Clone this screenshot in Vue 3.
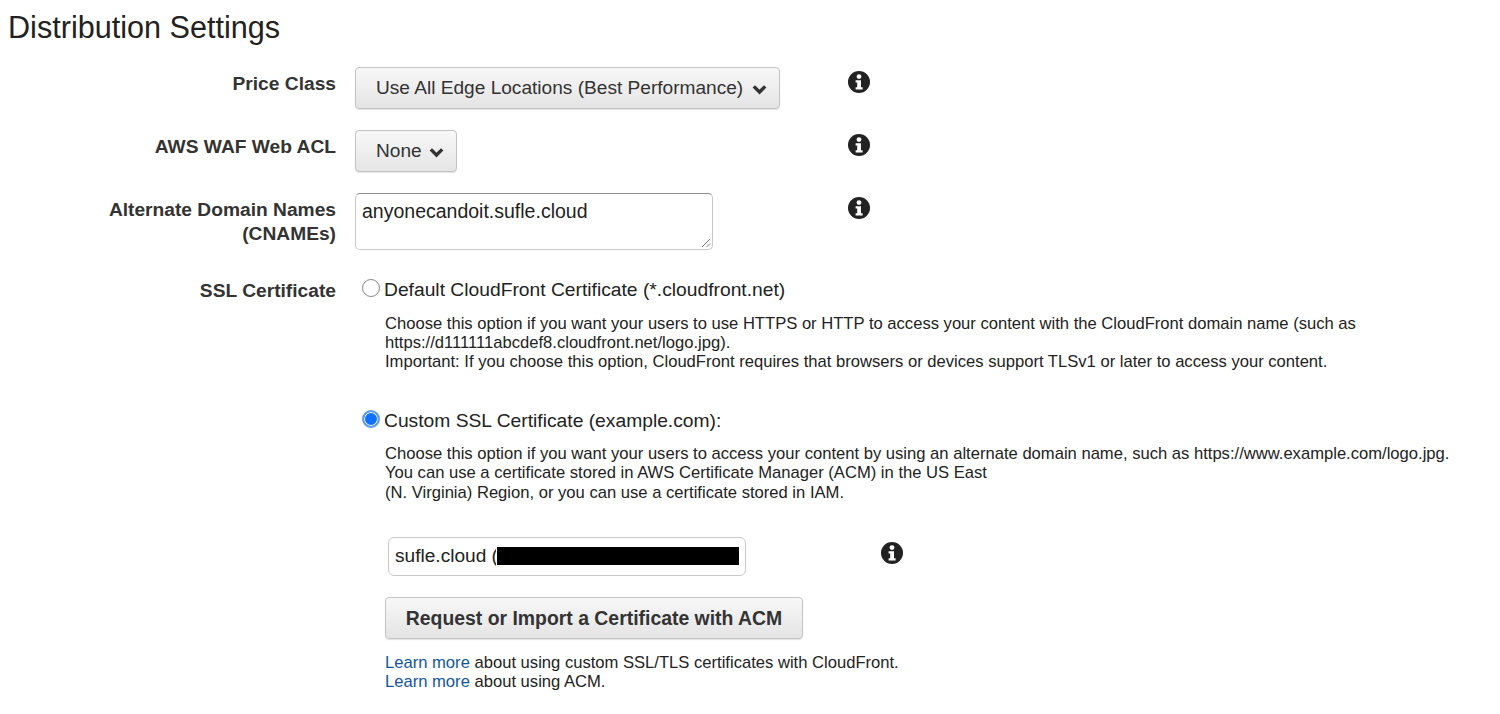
<script setup>
const rows = [
  { label: 'Price Class', kind: 'pick', value: 'Use All Edge Locations (Best Performance)' },
  { label: 'AWS WAF Web ACL', kind: 'pick', value: 'None', tight: true },
  { label: 'Alternate Domain Names (CNAMEs)', kind: 'text', value: 'anyonecandoit.sufle.cloud' },
];
</script>

<template>
  <div class="page">
    <h1>Distribution Settings</h1>

    <div v-for="row in rows" :key="row.label" class="row">
      <div class="label">{{ row.label }}</div>
      <div class="control">
        <div v-if="row.kind === 'pick'" class="btn select" :class="{ tight: row.tight }">
          <span>{{ row.value }}</span>
          <svg class="chev" viewBox="0 0 15 11" width="15" height="11">
            <path d="M1.8 2.4 7.5 8 13.2 2.4" fill="none" stroke="#333" stroke-width="3.4" />
          </svg>
        </div>
        <div v-else class="area">
          {{ row.value }}
          <svg class="grip" viewBox="0 0 10 10" width="10" height="10">
            <path d="M1 9 9 1M5.5 9 9 5.5" stroke="#777" stroke-width="1" fill="none" />
          </svg>
        </div>
      </div>
      <svg class="info" viewBox="0 0 22 22" width="22" height="22">
        <circle cx="11" cy="11" r="11" fill="#222" />
        <circle cx="11" cy="5.6" r="2.4" fill="#fff" />
        <path d="M7.6 9.2h5.4v7h1.6v2.4H7.6v-2.4h1.6v-4.6H7.6z" fill="#fff" />
      </svg>
    </div>

    <div class="ssl">
      <div class="label">SSL Certificate</div>
      <div class="ssl-body">
        <label class="radio-line">
          <span class="radio"></span>
          Default CloudFront Certificate (*.cloudfront.net)
        </label>
        <div class="desc first">
          Choose this option if you want your users to use HTTPS or HTTP to access your content with the CloudFront domain name (such as<br />
          https://d111111abcdef8.cloudfront.net/logo.jpg).<br />
          Important: If you choose this option, CloudFront requires that browsers or devices support TLSv1 or later to access your content.
        </div>

        <label class="radio-line second">
          <span class="radio on"></span>
          Custom SSL Certificate (example.com):
        </label>
        <div class="desc">
          Choose this option if you want your users to access your content by using an alternate domain name, such as https://www.example.com/logo.jpg.<br />
          You can use a certificate stored in AWS Certificate Manager (ACM) in the US East<br />
          (N. Virginia) Region, or you can use a certificate stored in IAM.
        </div>

        <div class="cert-row">
          <div class="cert">
            <span>sufle.cloud (</span>
            <span class="redact"></span>
          </div>
          <svg class="info" viewBox="0 0 22 22" width="22" height="22">
            <circle cx="11" cy="11" r="11" fill="#222" />
            <circle cx="11" cy="5.6" r="2.4" fill="#fff" />
            <path d="M7.6 9.2h5.4v7h1.6v2.4H7.6v-2.4h1.6v-4.6H7.6z" fill="#fff" />
          </svg>
        </div>

        <div class="btn request">Request or Import a Certificate with ACM</div>

        <div class="desc links">
          <a>Learn more</a> about using custom SSL/TLS certificates with CloudFront.<br />
          <a>Learn more</a> about using ACM.
        </div>
      </div>
    </div>
  </div>
</template>

<style>
html,
body {
  background: #fff;
  overflow: hidden;
}
</style>

<style scoped>
.page {
  width: 1500px;
  height: 714px;
  font-family: "Liberation Sans", Arial, sans-serif;
  color: #222;
  overflow: hidden;
}

h1 {
  margin: 0;
  padding: 11px 0 0 8px;
  height: 67px;
  box-sizing: border-box;
  font-size: 30.6px;
  line-height: 32px;
  font-weight: 400;
}

.row {
  display: grid;
  grid-template-columns: 336px 474px 22px;
  column-gap: 19px;
  margin-bottom: 21px;
}

.label {
  box-sizing: border-box;
  text-align: right;
  font-weight: 700;
  font-size: 19.2px;
  line-height: 23.5px;
  color: #333;
  padding: 5px 0 0 90px;
}

.row .info {
  margin-top: 4px;
}

.btn {
  box-sizing: border-box;
  border: 1px solid #c4c4c4;
  border-radius: 4px;
  background: linear-gradient(#f8f8f8, #e4e4e4);
  box-shadow: 0 1px 1px rgba(0, 0, 0, 0.12);
  color: #333;
}

.select {
  display: inline-flex;
  align-items: center;
  gap: 9px;
  height: 42px;
  padding: 0 12px 0 20px;
  font-size: 19.1px;
}

.select.tight {
  gap: 7px;
}

.chev {
  margin-top: 3px;
}

.area {
  position: relative;
  box-sizing: border-box;
  width: 358px;
  height: 57px;
  border: 1px solid #c8c8c8;
  border-top-color: #8a8a8a;
  border-radius: 5px;
  padding: 6px 6px;
  font-size: 19.5px;
  line-height: 22px;
  color: #222;
}

.grip {
  position: absolute;
  right: 1px;
  bottom: 1px;
}

.ssl {
  display: grid;
  grid-template-columns: 336px 1fr;
  column-gap: 25px;
}

.ssl > .label {
  padding-top: 8px;
}

.ssl-body {
  min-width: 0;
  padding-top: 8px;
}

.radio-line {
  display: flex;
  align-items: center;
  gap: 4px;
  height: 22px;
  font-size: 19.25px;
  color: #222;
}

.second {
  margin-top: 39px;
}

.radio {
  box-sizing: border-box;
  width: 18px;
  height: 18px;
  margin-left: 1px;
  border: 1px solid #8a8a8a;
  border-radius: 50%;
  background: #fff;
  margin-top: -5px;
}

.radio.on {
  border: 2px solid #5b9bf0;
  background: #0f6fff;
  box-shadow: inset 0 0 0 1px #fff;
}

.desc {
  margin: 12px 0 0 24px;
  font-size: 16.6px;
  line-height: 19.3px;
  color: #222;
  white-space: nowrap;
}

.first {
  margin-top: 13px;
  line-height: 19px;
}

.cert-row {
  display: flex;
  align-items: flex-start;
  gap: 135px;
  margin: 35px 0 0 27px;
}

.cert-row .info {
  margin-top: 5px;
}

.cert {
  box-sizing: border-box;
  width: 358px;
  height: 39px;
  display: flex;
  align-items: center;
  border: 1px solid #c8c8c8;
  border-radius: 6px;
  padding: 0 6px;
  font-size: 19.1px;
  color: #222;
  white-space: pre;
}

.redact {
  width: 242px;
  height: 18px;
  margin-left: -1px;
  background: #000;
  outline: 1px solid #fff;
}

.request {
  margin: 21px 0 0 24px;
  width: 418px;
  height: 42px;
  line-height: 40px;
  text-align: center;
  font-size: 19.4px;
  font-weight: 700;
}

.links {
  margin-top: 14px;
}

a {
  color: #14569e;
}
</style>
